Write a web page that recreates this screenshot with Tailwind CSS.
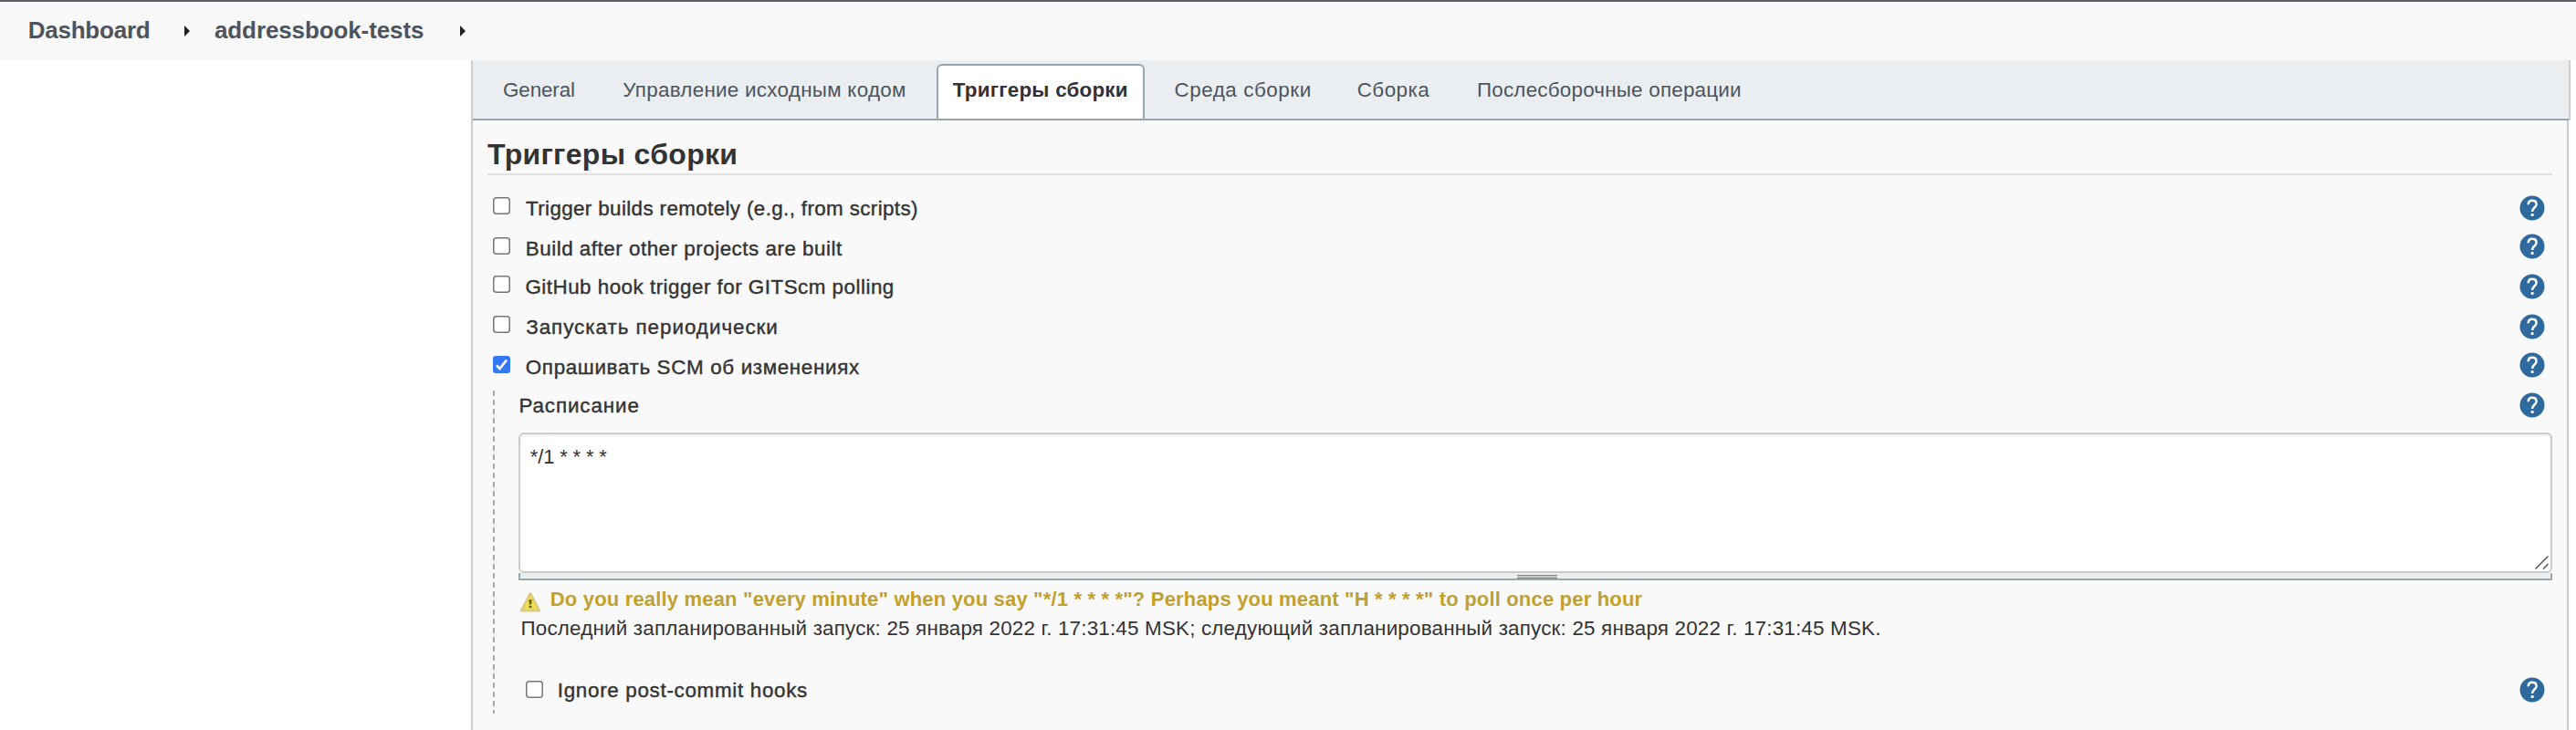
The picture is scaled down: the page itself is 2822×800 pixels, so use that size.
<!DOCTYPE html>
<html lang="ru">
<head>
<meta charset="utf-8">
<title>addressbook-tests Config</title>
<script src="https://cdn.jsdelivr.net/npm/@tailwindcss/browser@4"></script>
</head>
<body class="flex h-[800px] w-[2822px] flex-col overflow-hidden bg-white font-['Liberation_Sans',Arial,sans-serif] text-[22.4px] leading-[25px] text-[#333]">
<svg class="hidden">
  <symbol id="help" viewBox="0 0 28 28">
    <circle cx="14" cy="14" r="13.5" fill="#2e6a9e"/>
    <path d="M9.7 10.3C9.7 7.2 11.5 5.7 14.1 5.7s4.5 1.6 4.5 4.2c0 3.6-4.5 3.7-4.5 8.1" fill="none" stroke="#fff" stroke-width="2.5"/>
    <rect x="12.7" y="20.1" width="2.9" height="2.8" fill="#fff"/>
  </symbol>
  <symbol id="box" viewBox="0 0 19 19">
    <rect x=".75" y=".75" width="17.5" height="17.5" rx="3" fill="#fff" stroke="#767676" stroke-width="1.5"/>
  </symbol>
  <symbol id="arrow" viewBox="0 0 6 12"><path d="M0 0l6 6-6 6z" fill="#222"/></symbol>
</svg>

<header class="flex h-[66px] shrink-0 items-start border-t-2 border-[#625f66] bg-[#f8f8f8] pl-[30.7px] text-[26px] leading-[30px] font-bold text-[#4d545d]">
  <a class="mt-4 w-[171px] tracking-[-0.227px]">Dashboard</a>
  <svg class="mt-[26px] h-3 w-1.5"><use href="#arrow"/></svg>
  <a class="mt-4 ml-[27.3px] w-[269px] tracking-[-0.108px]">addressbook-tests</a>
  <svg class="mt-[26px] h-3 w-1.5"><use href="#arrow"/></svg>
</header>

<div class="flex min-h-0 flex-1">
  <aside class="w-[516px] shrink-0"></aside>
  <main class="flex w-[2300px] shrink-0 flex-col">
    <nav class="flex h-[66px] shrink-0 items-start border-x-2 border-[#ccc] bg-[#eaeef1]">
      <div class="flex h-[66px] w-full items-start border-b-2 border-[#9aa5ab] pl-[33px] whitespace-nowrap text-[#4d545d]">
        <a class="mt-5 w-[131.3px] tracking-[-0.11px]">General</a>
        <a class="mt-5 w-[343.7px] tracking-[0.28px]">Управление исходным кодом</a>
        <a class="mt-1 h-[60px] w-[228px] rounded-t-md border-2 border-b-0 border-[#9aa5ab] bg-white pt-3.5 pl-[15.8px] font-bold tracking-[0.22px] text-[#333]">Триггеры сборки</a>
        <a class="mt-5 ml-[32.5px] w-[200.2px] tracking-[0.56px]">Среда сборки</a>
        <a class="mt-5 w-[131.3px] tracking-[0.5px]">Сборка</a>
        <a class="mt-5 tracking-[0.22px]">Послесборочные операции</a>
      </div>
    </nav>

    <section class="flex w-[2298px] flex-1 flex-col border-x-2 border-[#ccc] bg-[#f9f9f9] pt-[19px] pr-4 pl-4">
      <h1 class="h-[41px] shrink-0 border-b-2 border-[#e0e0e0] text-[32px] leading-[36px] font-bold tracking-[0.306px]">Триггеры сборки</h1>

      <div class="mt-[22px] flex flex-col pr-2 pl-1.5 [-webkit-text-stroke:0.4px_#333]">
        <div class="flex h-11 items-start">
          <svg class="mt-0.5 size-[19px]"><use href="#box"/></svg>
          <label class="mt-0.5 ml-[17px] tracking-[0.37px]">Trigger builds remotely (e.g., from scripts)</label>
          <svg class="ml-auto size-7"><use href="#help"/></svg>
        </div>
        <div class="flex h-[42px] items-start">
          <svg class="mt-0.5 size-[19px]"><use href="#box"/></svg>
          <label class="mt-0.5 ml-[16.8px] tracking-[0.51px]">Build after other projects are built</label>
          <svg class="-mt-0.5 ml-auto size-7"><use href="#help"/></svg>
        </div>
        <div class="flex h-11 items-start">
          <svg class="mt-0.5 size-[19px]"><use href="#box"/></svg>
          <label class="mt-0.5 ml-[16.4px] tracking-[0.49px]">GitHub hook trigger for GITScm polling</label>
          <svg class="ml-auto size-7"><use href="#help"/></svg>
        </div>
        <div class="flex h-11 items-start">
          <svg class="mt-0.5 size-[19px]"><use href="#box"/></svg>
          <label class="mt-0.5 ml-[17.2px] tracking-[0.97px]">Запускать периодически</label>
          <svg class="ml-auto size-7"><use href="#help"/></svg>
        </div>
        <div class="flex h-10 items-start">
          <svg class="mt-0.5 size-[19px]" viewBox="0 0 19 19"><rect width="19" height="19" rx="3" fill="#3478f6"/><path d="M4 10.3l3.5 3.8L14.9 4.6" fill="none" stroke="#fff" stroke-width="2.6"/></svg>
          <label class="mt-0.5 ml-[16.8px] tracking-[0.65px]">Опрашивать SCM об изменениях</label>
          <svg class="-mt-0.5 ml-auto size-7"><use href="#help"/></svg>
        </div>
      </div>

      <div class="flex pl-1.5">
        <div class="h-[354px] w-0.5 shrink-0 bg-[repeating-linear-gradient(to_bottom,#aaa_0,#aaa_6px,transparent_6px,transparent_10px)]"></div>
        <div class="ml-[26px] flex flex-1 flex-col">
          <div class="flex h-[46px] items-start pr-2 [-webkit-text-stroke:0.4px_#333]">
            <label class="mt-1 ml-[0.4px] tracking-[0.9px]">Расписание</label>
            <svg class="mt-0.5 ml-auto size-7"><use href="#help"/></svg>
          </div>
          <div class="relative h-[154px]">
            <textarea class="block h-[154px] w-full resize-none overflow-hidden rounded-md border-2 border-[#ccc] bg-white pt-3 pl-[10.8px] text-[22px] leading-[25px] tracking-[-0.15px] shadow-[inset_0_2px_2px_rgba(0,0,0,0.06)]">*/1 * * * *</textarea>
            <svg class="absolute right-1 bottom-1 h-[15px] w-[15px]" viewBox="0 0 15 15"><path d="M.5 14.5l14-14M9 14.5l5.5-5.5" stroke="#555" stroke-width="1.5" fill="none"/></svg>
          </div>
          <div class="flex h-2 items-start justify-center border-x-2 border-b-2 border-[#9aa5ab] bg-[#eaeef1]">
            <div class="mt-0.5 ml-1 h-1 w-11 border-y border-[#888] bg-[#c4c6c6]"></div>
          </div>
          <div class="mt-2 flex h-8 items-start text-[22px] leading-[25px] font-bold whitespace-nowrap text-[#c0a030]">
            <svg class="mt-1 ml-px h-[23px] w-6" viewBox="0 0 24 23">
              <path d="M12 2.2L22 21.3H2z" fill="#f0da58" stroke="#dccb7c" stroke-width="2.5" stroke-linejoin="round"/>
              <path d="M12 6L18.5 18.5H5.500z" fill="#f0dc4e"/>
              <path d="M10.4 9h3.2l-.5 5.500h-2.2z" fill="#67602c"/><rect x="10.6" y="15.8" width="2.8" height="2.4" fill="#67602c"/>
            </svg>
            <span class="ml-[9.8px] tracking-[0.178px]">Do you really mean "every minute" when you say "*/1 * * * *"? Perhaps you meant "H * * * *" to poll once per hour</span>
          </div>
          <p class="ml-[2.5px] h-[66px] whitespace-nowrap tracking-[0.19px]">Последний запланированный запуск: 25 января 2022 г. 17:31:45 MSK; следующий запланированный запуск: 25 января 2022 г. 17:31:45 MSK.</p>
          <div class="flex items-start pr-2 pl-2 [-webkit-text-stroke:0.4px_#333]">
            <svg class="mt-1 size-[19px]"><use href="#box"/></svg>
            <label class="mt-0.5 ml-[15.8px] tracking-[0.69px]">Ignore post-commit hooks</label>
            <svg class="ml-auto size-7"><use href="#help"/></svg>
          </div>
        </div>
      </div>
    </section>
  </main>
</div>
</body>
</html>
